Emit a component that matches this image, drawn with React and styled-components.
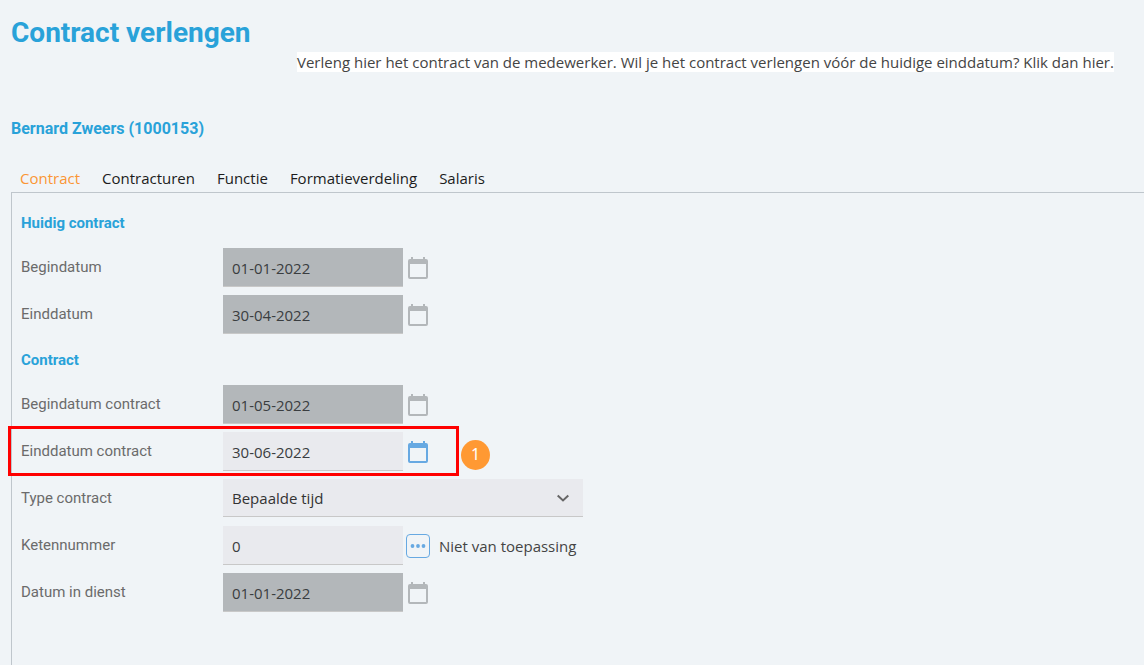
import React from "react";
import styled, { createGlobalStyle } from "styled-components";

const ui = `Roboto, "Liberation Sans", sans-serif`;
const text = `"Open Sans", "Noto Sans", sans-serif`;

const GlobalStyle = createGlobalStyle`
  *, *::before, *::after { box-sizing: border-box; }
  body { margin: 0; background: #f0f4f7; }
  button, input, select { margin: 0; }
`;

const Page = styled.main`
  min-height: 100vh;
  display: flex;
  flex-direction: column;
  padding: 17px 0 0 11px;
  font-family: ${text};
  font-size: 15px;
  color: #444;
`;

const Title = styled.h1`
  margin: 0;
  font: 700 28px/32px ${ui};
  color: #29a2d9;
`;

const Intro = styled.p`
  margin: 3px 24px 0 286px;
  line-height: 20px;
`;

const IntroText = styled.span`
  background: #fff;
`;

const Employee = styled.h2`
  margin: 47px 0 0;
  font: 700 16px/20px ${ui};
  color: #29a2d9;
`;

const Tabs = styled.div`
  display: flex;
  gap: 22px;
  margin-top: 27px;
  padding-left: 9px;
`;

const Tab = styled.button`
  padding: 1px 0 3px;
  border: 0;
  background: none;
  font: 15px/22px ${text};
  color: ${(p) => (p["aria-selected"] ? "#fb9634" : "#1c1c1c")};
  cursor: pointer;
`;

const Panel = styled.section`
  flex: 1;
  border: solid #bfc6cc;
  border-width: 1px 0 0 1px;
  padding: 20px 9px;
`;

const Group = styled.section`
  display: flex;
  flex-direction: column;
  gap: 8px;
  margin-bottom: 16px;
`;

const GroupTitle = styled.h3`
  margin: 0 0 7px;
  font: 700 15px/20px ${ui};
  color: #29a2d9;
`;

const Row = styled.div`
  position: relative;
  display: grid;
  grid-template-columns: 202px 1fr;
  height: 39px;
`;

const Label = styled.label`
  font: 15px/38px ${ui};
  color: #6b6b6b;
`;

const Control = styled.div`
  display: flex;
  align-items: center;
`;

const Input = styled.input`
  width: 180px;
  height: 39px;
  padding: 2px 9px 0;
  border: 0;
  border-bottom: 1px solid #c8c8c8;
  border-radius: 0;
  background: ${(p) => (p.disabled ? "#b3b7ba" : "#e9eaee")};
  font: 15px/20px ${text};
  color: #3a3d40;
  outline: none;
`;

const SelectBox = styled.div`
  display: grid;
  grid-template-columns: 1fr 40px;
  align-items: center;
  align-self: flex-start;
  width: 360px;
  svg {
    grid-area: 1 / 2;
    justify-self: center;
    pointer-events: none;
  }
`;

const Select = styled.select`
  grid-area: 1 / 1 / 2 / 3;
  appearance: none;
  height: 38px;
  padding: 0 40px 0 9px;
  border: 0;
  border-bottom: 1px solid #c8c8c8;
  border-radius: 0;
  background: #e9eaee;
  font: 15px/20px ${text};
  color: #333;
`;

const IconButton = styled.button`
  display: flex;
  padding: 0;
  margin-left: 5px;
  border: 0;
  background: none;
  color: ${(p) => (p.disabled ? "#b3b7ba" : "#67a9e2")};
`;

const LookupButton = styled.button`
  display: grid;
  place-items: center;
  width: 24px;
  height: 24px;
  margin-left: 3px;
  padding: 0;
  border: 1px solid #67a9e2;
  border-radius: 4px;
  background: none;
  color: #67a9e2;
`;

const Hint = styled.span`
  margin-left: 9px;
  line-height: 20px;
`;

const Highlight = styled.div`
  position: absolute;
  top: -6px;
  left: -13px;
  width: 451px;
  height: 50px;
  border: 3px solid #f00;
  pointer-events: none;
`;

const Badge = styled.span`
  position: absolute;
  top: 8px;
  left: 440px;
  width: 29px;
  height: 30px;
  border-radius: 50%;
  background: #ff9933;
  font: 16px/29px "Noto Sans", sans-serif;
  text-align: center;
  color: #fff;
`;

const CalendarIcon = () => (
  <svg width="20" height="22" viewBox="0 0 20 22" fill="currentColor" aria-hidden="true">
    <path
      fillRule="evenodd"
      d="M3 0h2v2h10V0h2v2h1q2 0 2 2v16q0 2-2 2H2q-2 0-2-2V4Q0 2 2 2h1zM2 7v13h16V7z"
    />
  </svg>
);

const DateField = ({ id, label, value, disabled, children }) => (
  <Row>
    <Label htmlFor={id}>{label}</Label>
    <Control>
      <Input id={id} defaultValue={value} disabled={disabled} />
      <IconButton type="button" disabled={disabled} aria-label={`Kies ${label}`}>
        <CalendarIcon />
      </IconButton>
    </Control>
    {children}
  </Row>
);

const tabs = ["Contract", "Contracturen", "Functie", "Formatieverdeling", "Salaris"];

export default function App() {
  return (
    <>
      <GlobalStyle />
      <Page>
        <Title>Contract verlengen</Title>
        <Intro>
          <IntroText>
            Verleng hier het contract van de medewerker. Wil je het contract verlengen vóór de
            huidige einddatum? Klik dan hier.
          </IntroText>
        </Intro>
        <Employee>Bernard Zweers (1000153)</Employee>
        <Tabs role="tablist">
          {tabs.map((name, i) => (
            <Tab key={name} type="button" role="tab" aria-selected={i === 0}>
              {name}
            </Tab>
          ))}
        </Tabs>
        <Panel role="tabpanel">
          <Group>
            <GroupTitle>Huidig contract</GroupTitle>
            <DateField id="begin" label="Begindatum" value="01-01-2022" disabled />
            <DateField id="eind" label="Einddatum" value="30-04-2022" disabled />
          </Group>
          <Group>
            <GroupTitle>Contract</GroupTitle>
            <DateField id="begin-contract" label="Begindatum contract" value="01-05-2022" disabled />
            <DateField id="eind-contract" label="Einddatum contract" value="30-06-2022">
              <Highlight />
              <Badge>1</Badge>
            </DateField>
            <Row>
              <Label htmlFor="type">Type contract</Label>
              <SelectBox>
                <Select id="type" defaultValue="Bepaalde tijd">
                  <option>Bepaalde tijd</option>
                </Select>
                <svg width="12" height="8" viewBox="0 0 12 8" fill="none" stroke="#666" strokeWidth="2" aria-hidden="true">
                  <path d="M.7 1.500 6 6.500 11.300 1.500" />
                </svg>
              </SelectBox>
            </Row>
            <Row>
              <Label htmlFor="keten">Ketennummer</Label>
              <Control>
                <Input id="keten" defaultValue="0" />
                <LookupButton type="button" aria-label="Zoek ketennummer">
                  <svg width="16" height="4" viewBox="0 0 16 4" fill="currentColor" aria-hidden="true">
                    <circle cx="2.500" cy="2" r="1.900" />
                    <circle cx="8" cy="2" r="1.900" />
                    <circle cx="13.500" cy="2" r="1.900" />
                  </svg>
                </LookupButton>
                <Hint>Niet van toepassing</Hint>
              </Control>
            </Row>
            <DateField id="dienst" label="Datum in dienst" value="01-01-2022" disabled />
          </Group>
        </Panel>
      </Page>
    </>
  );
}
